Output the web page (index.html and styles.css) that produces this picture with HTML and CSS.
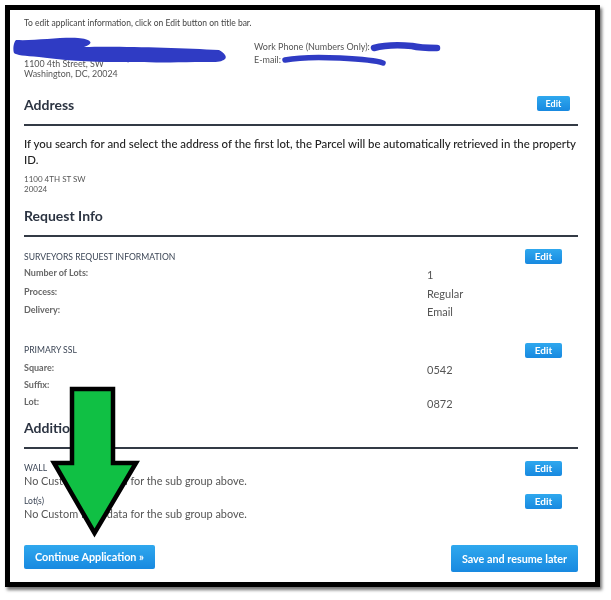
FILE: index.html
```html
<!DOCTYPE html>
<html lang="en">
<head>
    <meta charset="UTF-8">
    <title>Review Application</title>
    <link rel="stylesheet" href="styles.css">
</head>
<body>
    <div class="frame">
        <div class="content">
            <p class="intro">To edit applicant information, click on Edit button on title bar.</p>

            <div class="applicant">
                <div class="applicant-address">
                    1100 4th Street, SW<br>
                    Washington, DC, 20024
                </div>
                <div class="applicant-contact">
                    Work Phone (Numbers Only):<br>
                    E-mail:
                </div>
            </div>

            <div class="section-head">
                <h2>Address</h2>
                <a class="btn-edit btn-edit-small">Edit</a>
            </div>
            <p class="notice">If you search for and select the address of the first lot, the Parcel will be automatically retrieved in the property ID.</p>
            <p class="parcel">1100 4TH ST SW<br>20024</p>

            <div class="section-head section-request">
                <h2>Request Info</h2>
            </div>

            <div class="group-head group-surveyors">
                <span>SURVEYORS REQUEST INFORMATION</span>
                <a class="btn-edit">Edit</a>
            </div>
            <div class="field"><span>Number of Lots:</span><span class="value">1</span></div>
            <div class="field"><span>Process:</span><span class="value">Regular</span></div>
            <div class="field"><span>Delivery:</span><span class="value">Email</span></div>

            <div class="group-head group-ssl">
                <span>PRIMARY SSL</span>
                <a class="btn-edit">Edit</a>
            </div>
            <div class="field field-tight"><span>Square:</span><span class="value">0542</span></div>
            <div class="field field-tight"><span>Suffix:</span><span class="value"></span></div>
            <div class="field field-tight"><span>Lot:</span><span class="value">0872</span></div>

            <div class="section-head section-additional">
                <h2>Additional</h2>
            </div>

            <div class="group-head group-wall">
                <span>WALL</span>
                <a class="btn-edit">Edit</a>
            </div>
            <p class="empty">No Custom Field data for the sub group above.</p>
            <div class="group-head group-lots">
                <span>Lot(s)</span>
                <a class="btn-edit">Edit</a>
            </div>
            <p class="empty">No Custom Field data for the sub group above.</p>

            <div class="actions">
                <a class="btn btn-continue">Continue Application »</a>
                <a class="btn btn-save">Save and resume later</a>
            </div>
        </div>

        <!-- redaction scribbles -->
        <svg class="scribbles" viewBox="0 0 585 577" aria-hidden="true">
            <path class="scribble-fat" d="M6 30 C25 31 50 27 68 28 C80 29 86 33 74 37 C110 36 170 38 209 40 C215 43 217 47 215 49 C210 53 205 52 185 52 C150 53 125 52 107 52 C80 52 50 50 29 47 C15 46 6 45 4 43 C3 40 3 33 6 30 Z"/>
            <path class="scribble scribble-phone" d="M364 38 C375 35 390 35 402 36 C410 38 418 38 427 38"/>
            <path class="scribble" d="M275 50 C290 47 310 47 330 48 C350 49 365 50 373 53"/>
        </svg>

        <!-- green arrow pointing at the continue button -->
        <svg class="arrow" viewBox="0 0 92 152" aria-hidden="true">
            <path d="M23 3 H64 V77 H87 L45.500 147 L5 77 H23 Z"/>
        </svg>
    </div>
</body>
</html>
```

FILE: styles.css
```css
* {
    margin: 0;
    padding: 0;
    box-sizing: border-box;
}

body {
    font-family: Lato, "Liberation Sans", sans-serif;
    background: white;
    color: #555;
    width: 611px;
    height: 600px;
    overflow: hidden;
}

.frame {
    position: relative;
    width: 595px;
    height: 582px;
    margin: 5px 0 0 5px;
    border: 5px solid #000;
    background: white;
    box-shadow: 2px 3px 3px rgba(0, 0, 0, 0.55);
}

.content {
    padding: 7px 17px 0 14px;
    filter: blur(0.35px);
}

.intro {
    font-size: 8.5px;
    line-height: 12px;
    color: #444;
}

.applicant {
    display: flex;
    margin-top: 11px;
    color: #555;
}

.applicant-address {
    width: 230px;
    padding-top: 19px;
    font-size: 8.9px;
    line-height: 10px;
}

.applicant-contact {
    font-size: 9px;
    line-height: 13px;
}

.section-head {
    display: flex;
    justify-content: space-between;
    align-items: flex-start;
    height: 34px;
    margin-top: 13px;
    padding-bottom: 6px;
    border-bottom: 2px solid #333a45;
}

.section-head h2 {
    font-size: 14px;
    font-weight: 700;
    line-height: 26px;
    color: #2c3442;
}

.section-request {
    margin-top: 9px;
}

.section-additional {
    margin-top: 4px;
}

.btn-edit {
    display: block;
    width: 37px;
    height: 15px;
    margin-right: 16px;
    border-radius: 2px;
    background: linear-gradient(#2fa8ee, #1889e0);
    color: white;
    font-size: 10px;
    font-weight: 700;
    line-height: 15px;
    text-align: center;
}

.btn-edit-small {
    width: 33px;
    margin-top: 4px;
    margin-right: 8px;
    font-size: 9px;
}

.notice {
    margin-top: 10px;
    font-size: 11.4px;
    font-weight: 500;
    line-height: 15.5px;
    color: #222;
}

.parcel {
    margin-top: 7px;
    font-size: 8px;
    line-height: 10px;
}

.group-head {
    display: flex;
    justify-content: space-between;
    align-items: center;
    height: 15px;
    font-size: 8.6px;
    color: #3c4656;
}

.group-surveyors {
    margin-top: 12px;
}

.group-ssl {
    align-items: flex-start;
    height: 16px;
    margin-top: 23px;
    line-height: 15px;
}

.group-wall {
    margin-top: 12px;
}

.group-lots {
    margin-top: 6.500px;
}

.field {
    display: flex;
    height: 18.5px;
    font-size: 9px;
    font-weight: 700;
    line-height: 18px;
    color: #666;
}

.field-tight {
    height: 17.4px;
}

.field .value {
    margin-left: auto;
    width: 151px;
    padding-top: 2px;
    font-size: 11px;
    font-weight: 400;
    color: #555;
}

.empty {
    margin-top: -1.5px;
    font-size: 10.9px;
    line-height: 13px;
    color: #555;
}

.actions {
    display: flex;
    justify-content: space-between;
    align-items: flex-start;
    margin-top: 24.5px;
}

.btn {
    display: block;
    border-radius: 2px;
    background: linear-gradient(#2fa8ee, #1889e0);
    color: white;
    font-size: 10.8px;
    font-weight: 700;
    text-align: center;
}

.btn-continue {
    width: 131px;
    height: 24px;
    line-height: 23px;
}

.btn-save {
    width: 127px;
    height: 27px;
    line-height: 27px;
}

.scribbles {
    position: absolute;
    top: 0;
    left: 0;
    width: 585px;
    height: 577px;
    pointer-events: none;
    filter: blur(0.5px);
}

.scribble {
    fill: none;
    stroke: #2f3bc4;
    stroke-width: 5.5px;
    stroke-linecap: round;
}

.scribble-phone {
    stroke-width: 6.5px;
}

.scribble-fat {
    fill: #2f3bc4;
}

.arrow {
    position: absolute;
    left: 38.5px;
    top: 376px;
    width: 92px;
    height: 152px;
}

.arrow path {
    fill: #10c044;
    stroke: #000;
    stroke-width: 4.5px;
}
```
